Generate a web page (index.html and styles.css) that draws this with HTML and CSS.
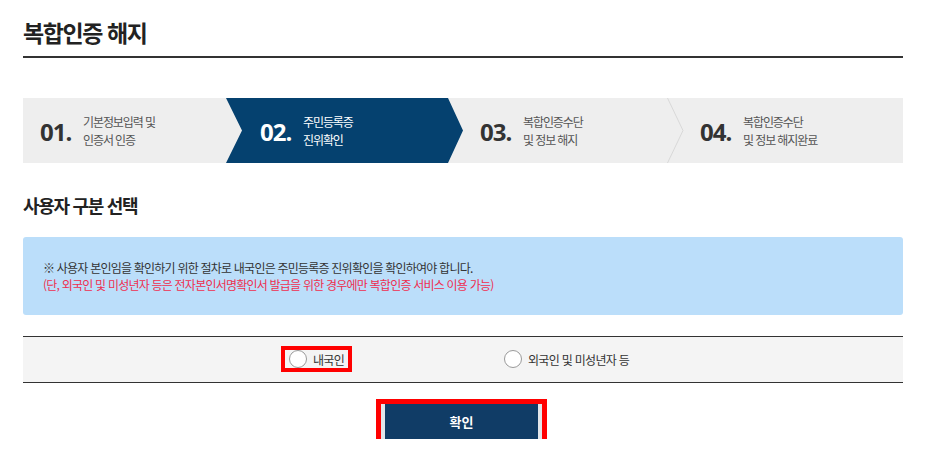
FILE: index.html
```html
<!DOCTYPE html>
<html lang="ko">
<head>
<meta charset="utf-8">
<title>복합인증 해지</title>
<link rel="stylesheet" href="styles.css">
</head>
<body>
<div class="wrap">
  <h1 class="page-title">복합인증 해지</h1>

  <ol class="steps">
    <li class="step">
      <span class="step-num">01.</span>
      <span class="step-label">기본정보입력 및<br>인증서 인증</span>
    </li>
    <li class="step step-active">
      <svg class="step-shape" viewBox="0 0 237 65" preserveAspectRatio="none" aria-hidden="true"><polygon points="0,0 222,0 237,32.5 222,65 0,65 16,32.5" fill="#05416f"/></svg>
      <span class="step-num">02.</span>
      <span class="step-label">주민등록증<br>진위확인</span>
    </li>
    <li class="step">
      <span class="step-num">03.</span>
      <span class="step-label">복합인증수단<br>및 정보 해지</span>
    </li>
    <li class="step">
      <svg class="step-divider" viewBox="0 0 17 65" aria-hidden="true"><polyline points="0.5,0 16,32.5 0.5,65" fill="none" stroke="#d8d8d8" stroke-width="1"/></svg>
      <span class="step-num">04.</span>
      <span class="step-label">복합인증수단<br>및 정보 해지완료</span>
    </li>
  </ol>

  <h2 class="section-title">사용자 구분 선택</h2>

  <div class="notice">
    <p class="notice-main">※ 사용자 본인임을 확인하기 위한 절차로 내국인은 주민등록증 진위확인을 확인하여야 합니다.</p>
    <p class="notice-sub">(단, 외국인 및 미성년자 등은 전자본인서명확인서 발급을 위한 경우에만 복합인증 서비스 이용 가능)</p>
  </div>

  <div class="choice-bar">
    <label class="choice choice-marked"><input type="radio" name="usertype" class="radio"><span>내국인</span></label>
    <label class="choice"><input type="radio" name="usertype" class="radio"><span>외국인 및 미성년자 등</span></label>
  </div>

  <div class="actions">
    <button type="button" class="btn-confirm">확인</button>
  </div>
</div>
</body>
</html>
```

FILE: styles.css
```css
* { box-sizing: border-box; }
html, body { margin: 0; padding: 0; background: #fff; }
body {
  font-family: "Noto Sans CJK KR", "Noto Sans", sans-serif;
  color: #333;
}
.wrap {
  width: 880px;
  margin-left: 23px;
}
.page-title {
  margin: 0;
  padding: 17px 0 9px;
  font-size: 23px;
  line-height: 30px;
  font-weight: 700;
  color: #222;
  letter-spacing: -1.4px;
  border-bottom: 2px solid #333;
}
.steps {
  list-style: none;
  margin: 40px 0 0;
  padding: 0;
  display: flex;
  height: 65px;
  background: #eeeeee;
}
.step {
  position: relative;
  width: 220px;
  display: flex;
  align-items: center;
  padding-left: 17px;
}
.step-shape {
  position: absolute;
  left: -17px;
  top: 0;
  width: 237px;
  height: 65px;
  z-index: 0;
}
.step-divider {
  position: absolute;
  left: -16px;
  top: 0;
  width: 17px;
  height: 65px;
}
.step-num {
  position: relative;
  z-index: 1;
  width: 43px;
  font-family: "Open Sans", "Noto Sans", sans-serif;
  font-weight: 700;
  font-size: 24px;
  letter-spacing: -1px;
  color: #333;
  line-height: 30px;
  padding-top: 3px;
}
.step-label {
  position: relative;
  z-index: 1;
  font-size: 12px;
  line-height: 18px;
  letter-spacing: -1.1px;
  color: #555;
}
.step-active .step-num,
.step-active .step-label { color: #fff; }

.section-title {
  margin: 29px 0 0;
  font-size: 18px;
  line-height: 26px;
  font-weight: 700;
  color: #222;
  letter-spacing: -1.3px;
}
.notice {
  margin-top: 19px;
  height: 78px;
  padding: 22px 20px;
  background: #bbdefa;
  border-radius: 3px;
}
.notice p {
  margin: 0;
  font-size: 12px;
  line-height: 17px;
  letter-spacing: -0.78px;
}
.notice-main { color: #333; }
.notice-sub { color: #ee2f50; }

.choice-bar {
  margin-top: 21px;
  display: flex;
  gap: 156px;
  padding: 13px 0 14px 262px;
  background: #f4f4f4;
  border-top: 1px solid #333;
  border-bottom: 1px solid #333;
}
.choice {
  display: flex;
  align-items: center;
  gap: 6px;
  height: 18px;
  font-size: 12px;
  letter-spacing: -0.7px;
  color: #333;
  cursor: pointer;
}
.choice-marked {
  padding: 0 4px;
  outline: 4px solid #ff0000;
}
.radio {
  appearance: none;
  -webkit-appearance: none;
  margin: 0;
  width: 18px;
  height: 18px;
  border: 1px solid #9a9a9a;
  border-radius: 50%;
  background: #fff;
}
.actions {
  display: flex;
  justify-content: center;
  margin-top: 21px;
  padding-right: 3px;
}
.btn-confirm {
  width: 161px;
  height: 35px;
  border: none;
  border-left: 4px solid #e2e6ea;
  border-right: 4px solid #e2e6ea;
  background: #103c66;
  color: #fff;
  font-family: "Noto Sans CJK KR", sans-serif;
  font-weight: 700;
  font-size: 13px;
  outline: 5px solid #ff0000;
}
```
